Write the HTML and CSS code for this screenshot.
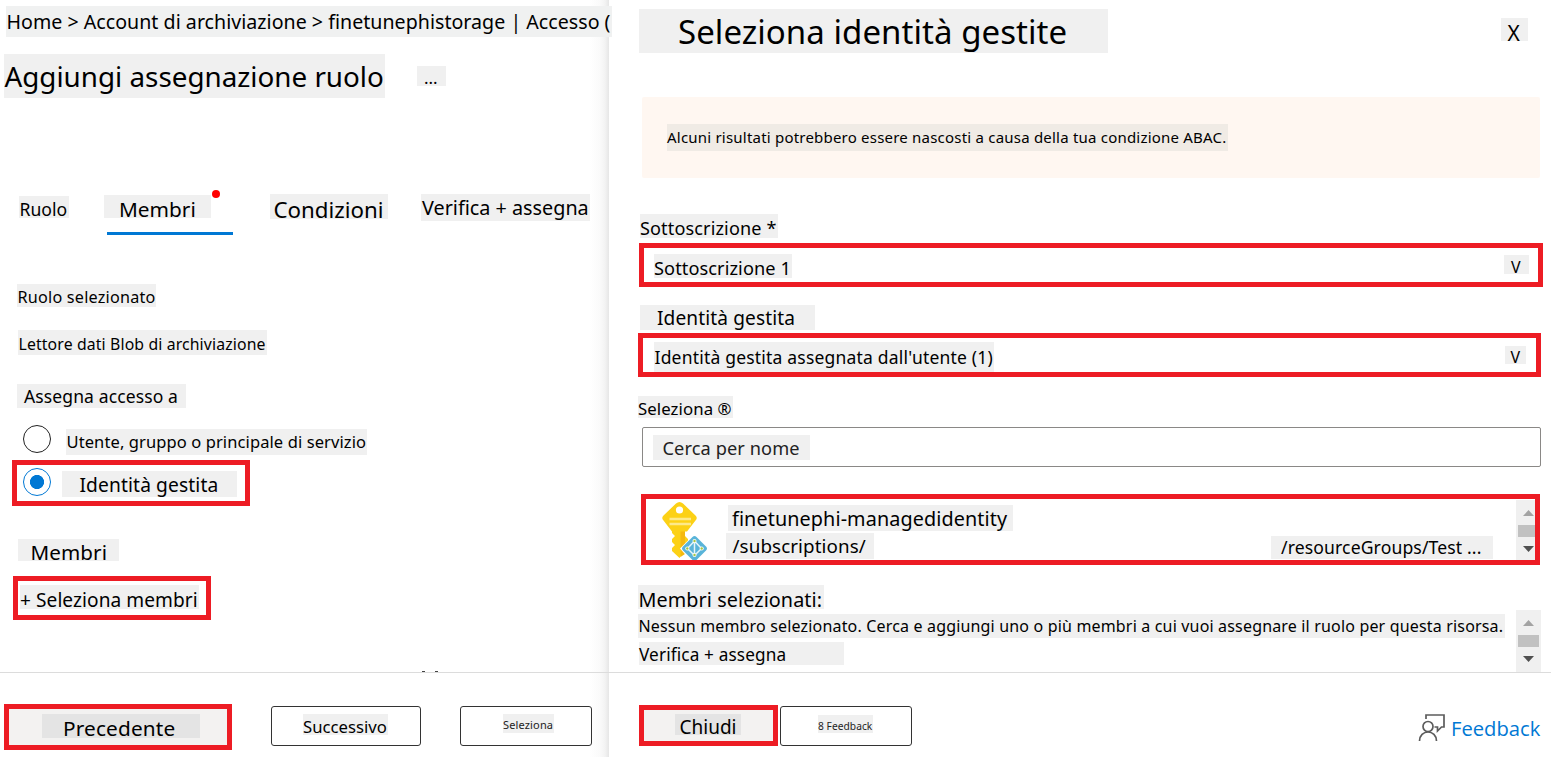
FILE: index.html
```html
<!DOCTYPE html>
<html lang="it">
<head>
<meta charset="utf-8">
<title>Aggiungi assegnazione ruolo</title>
<link rel="stylesheet" href="styles.css">
</head>
<body>
<div class="shell">
  <main class="pane pane-main">
    <div class="content">
      <nav class="chip crumb">Home &gt; Account di archiviazione &gt; finetunephistorage | Accesso (</nav>
      <header class="row title-row">
        <h1 class="chip title">Aggiungi assegnazione ruolo</h1>
        <span class="chip more">...</span>
      </header>
      <div class="row tabs">
        <span class="chip tab-role">Ruolo</span>
        <div class="tab-active"><span class="chip tab-members">Membri</span><i class="alert-dot"></i></div>
        <span class="chip tab-cond">Condizioni</span>
        <span class="chip tab-review">Verifica + assegna</span>
      </div>
      <p class="chip role-label">Ruolo selezionato</p>
      <p class="chip role-value">Lettore dati Blob di archiviazione</p>
      <p class="chip access-label">Assegna accesso a</p>
      <label class="row option"><i class="radio"></i><span class="chip opt-user">Utente, gruppo o principale di servizio</span></label>
      <label class="row marked option-on"><i class="radio on"></i><span class="chip opt-managed">Identità gestita</span></label>
      <p class="chip members-label">Membri</p>
      <div class="marked add-box"><a class="chip add">+ Seleziona membri</a></div>
      <div class="row specks"><i></i><i></i></div>
    </div>
    <footer class="row footer">
      <button class="marked prev"><span class="chip t-prev">Precedente</span></button>
      <button class="btn next"><span class="chip t-next">Successivo</span></button>
      <button class="btn pick"><span class="chip t-pick">Seleziona</span></button>
    </footer>
  </main>
  <aside class="pane pane-side">
    <div class="content">
      <header class="row side-head">
        <h2 class="chip side-title">Seleziona identità gestite</h2>
        <span class="chip close">X</span>
      </header>
      <div class="banner"><p class="chip banner-text">Alcuni risultati potrebbero essere nascosti a causa della tua condizione ABAC.</p></div>
      <p class="chip sub-label">Sottoscrizione *</p>
      <div class="row marked select-sub"><span class="chip sub-value">Sottoscrizione 1</span><span class="chip caret">V</span></div>
      <p class="chip id-label">Identità gestita</p>
      <div class="row marked select-id"><span class="chip id-value">Identità gestita assegnata dall'utente (1)</span><span class="chip caret caret-id">V</span></div>
      <p class="chip pick-label">Seleziona ®</p>
      <div class="search"><span class="chip search-text">Cerca per nome</span></div>
      <div class="row marked result">
        <svg class="key" width="50" height="60" viewBox="0 0 50 60">
          <path d="M12 29H25V36L28 39V47L19.500 58L12 51V48L15 45L12 42V39L15 36L12 33Z" fill="#fcd116"/>
          <path d="M20.500 31H25V54L20.500 57Z" fill="#f5b90f"/>
          <path d="M23 3.500L35.500 15.500Q38 18 35.500 20.500L27 31.500H12L3.500 20.500Q1 18 3.500 15.500L16 3.500Q19.500 .5 23 3.500Z" fill="#fcd116"/>
          <circle cx="19.500" cy="10" r="3.600" fill="#fff"/>
          <path d="M9.500 19H31M9.500 24H31" stroke="#fde98b" stroke-width="2.600"/>
          <path d="M34.500 34L51 48.500L34.500 65L20 48.500Z" fill="#fff"/>
          <path d="M32.500 37Q34.500 35 36.500 37L46 46.500Q48 48.500 46 50.500L36.500 60H32.500L23 50.500Q21 48.500 23 46.500Z" fill="#59b4d9"/>
          <path d="M34.500 40.500V55M34.500 41L27.500 48.500L34.500 55.500L41.500 48.500Z" fill="none" stroke="#e4f4fa" stroke-width="1.500"/>
          <g fill="#fff"><circle cx="34.500" cy="41" r="2"/><circle cx="27.300" cy="48.500" r="2"/><circle cx="41.700" cy="48.500" r="2"/><circle cx="34.500" cy="55" r="2"/></g>
          <g fill="#a3c644"><circle cx="34.500" cy="41" r="1.200"/><circle cx="27.300" cy="48.500" r="1.200"/><circle cx="41.700" cy="48.500" r="1.200"/><circle cx="34.500" cy="55" r="1.200"/></g>
        </svg>
        <div class="result-text">
          <span class="chip result-name">finetunephi-managedidentity</span>
          <span class="chip result-path">/subscriptions/</span>
        </div>
        <span class="chip result-group">/resourceGroups/Test ...</span>
        <svg class="scroll-a" width="25" height="61" viewBox="0 0 25 61">
          <path d="M0 0H25V61H0Z" fill="#f0f0f0"/><path d="M2 25H23V37H2Z" fill="#c1c1c1"/>
          <path d="M7 16L12.500 10L18 16Z" fill="#a3a3a3"/><path d="M7 46H18L12.500 52Z" fill="#505050"/>
        </svg>
      </div>
      <div class="row selected">
        <div class="selected-text">
          <h3 class="chip sel-title">Membri selezionati:</h3>
          <p class="chip sel-empty">Nessun membro selezionato. Cerca e aggiungi uno o più membri a cui vuoi assegnare il ruolo per questa risorsa.</p>
          <p class="chip sel-review">Verifica + assegna</p>
        </div>
        <svg class="scroll-b" width="25" height="62" viewBox="0 0 25 62">
          <path d="M0 0H25V62H0Z" fill="#f0f0f0"/><path d="M2 25H23V37H2Z" fill="#c1c1c1"/>
          <path d="M7 16L12.500 10L18 16Z" fill="#a3a3a3"/><path d="M7 46H18L12.500 52Z" fill="#505050"/>
        </svg>
      </div>
    </div>
    <footer class="row footer">
      <button class="marked shut"><span class="chip t-shut">Chiudi</span></button>
      <button class="btn fb"><span class="chip t-fb">8 Feedback</span></button>
      <a class="row feedback">
        <svg width="28" height="29" viewBox="0 0 28 29" fill="none" stroke="#5c5c5c" stroke-width="1.700">
          <path d="M8 6V2H26V14H23.500L19.500 18V14H16.500"/>
          <circle cx="10" cy="13.500" r="5"/>
          <path d="M1.500 28C1.500 22.500 5.500 19 10 19S18.500 22.500 18.500 28"/>
        </svg>
        <span class="fb-text">Feedback</span>
      </a>
    </footer>
  </aside>
</div>
</body>
</html>
```
FILE: styles.css
```css
* { box-sizing: border-box; }
body { margin: 0; background: #fff; color: #000; font-family: "Noto Sans", "Open Sans", sans-serif; }
h1, h2, h3, p { margin: 0; font-weight: 400; }
button { font-family: inherit; color: inherit; padding: 0; }

.shell { display: flex; width: 1551px; height: 757px; overflow: hidden; }
.pane { display: flex; flex-direction: column; height: 757px; }
.pane-main { width: 609px; background: linear-gradient(to right, #fff 590px, #fafafa 600px, #f3f3f3 605px, #e6e6e6 609px); }
.pane-side { width: 942px; }
.content { height: 672px; display: flex; flex-direction: column; align-items: flex-start; }
.row { display: flex; align-items: flex-start; }
.footer { height: 85px; border-top: 1px solid #dcdcdc; }

/* Highlighted label: --b is the distance from the box top to the text baseline */
.chip {
  display: block; flex: none;
  width: var(--w); height: var(--h);
  padding-left: var(--x, .5px);
  background: #f0f0f0;
  font-size: var(--s);
  line-height: calc(2 * var(--b) - 0.776em);
  letter-spacing: var(--ls, 0px);
  white-space: nowrap; text-align: left;
}
.marked { border: 5px solid #ed1c24; }
.btn { background: #fff; border: 1px solid #333; border-radius: 3px; }

/* Main pane */
.crumb { --w: 606px; --h: 31px; --b: 24px; --s: 19.6px; --ls: .025px; margin: 6px 0 0 6px; position: relative; z-index: 1; background: #f0f1f1; }
.title-row { margin: 17px 0 0 4px; gap: 32px; }
.title { --w: 381px; --h: 44px; --b: 33.5px; --s: 27.8px; }
.more { --w: 29px; --h: 20px; --b: 19px; --s: 17px; --x: 7px; margin-top: 12px; }
.tabs { margin: 95px 0 0 19px; }
.tab-role { --w: 50px; --h: 22px; --b: 20.3px; --s: 17.6px; margin-top: 3px; }
.tab-active { position: relative; width: 129px; height: 42px; margin: 0 0 0 35px; padding-top: 2px; }
.tab-active::after { content: ""; position: absolute; left: 3px; top: 39px; width: 126px; height: 3px; background: #0078d4; }
.alert-dot { position: absolute; left: 108px; top: -3px; width: 8px; height: 8px; border-radius: 50%; background: #f00; }
.tab-members { --w: 107px; --h: 23px; --b: 23px; --s: 20.8px; --x: 15px; }
.tab-cond { --w: 118px; --h: 25px; --b: 25px; --s: 22.3px; --x: 3.5px; margin: 1px 0 0 37px; }
.tab-review { --w: 169px; --h: 27px; --b: 22px; --s: 19.8px; --x: 1px; margin: 1px 0 0 33px; }
.role-label { --w: 139px; --h: 23px; --b: 20px; --s: 16.2px; --ls: .22px; margin: 49px 0 0 17px; }
.role-value { --w: 249px; --h: 25px; --b: 21px; --s: 15.8px; --ls: .13px; margin: 23px 0 0 18px; }
.access-label { --w: 169px; --h: 24px; --b: 19px; --s: 17.5px; --ls: .12px; --x: 7px; margin: 29px 0 0 17px; }
.option { margin: 17px 0 0 23px; height: 30px; }
.radio { flex: none; width: 28px; height: 28px; border: 1px solid #222; border-radius: 50%; background: #fff; }
.opt-user { --w: 301px; --h: 26px; --b: 19px; --s: 16.5px; --ls: .1px; margin: 4px 0 0 15px; }
.option-on { width: 238px; height: 46px; margin: 5px 0 0 12px; padding: 3px 0 0 6px; }
.radio.on { border-color: #0078d4; background: radial-gradient(circle, #0078d4 6.700px, #fff 7.400px); }
.opt-managed { --w: 175px; --h: 26px; --b: 21px; --s: 19.2px; --ls: .12px; --x: 17.5px; margin: 3px 0 0 11px; }
.members-label { --w: 101px; --h: 22px; --b: 21px; --s: 20.6px; --ls: .1px; --x: 12.5px; margin: 33px 0 0 18px; }
.add-box { width: 198px; height: 44px; margin: 15px 0 0 13px; padding: 4px 0 0 2px; }
.add { --w: 179px; --h: 24px; --b: 22.5px; --s: 19.1px; --ls: .06px; --x: 0px; }
.specks { margin: 51px 0 0 422px; gap: 10px; }
.specks i { width: 3px; height: 1px; background: #444; }

.prev { width: 228px; height: 46px; margin: 31px 0 0 4px; background: #f3f2f1; display: flex; padding: 5px 0 0 33px; }
.t-prev { --w: 158px; --h: 24px; --b: 23px; --s: 20.8px; --ls: .15px; --x: 21px; background: #e4e4e4; }
.next { width: 150px; height: 40px; margin: 33px 0 0 39px; display: flex; padding: 7px 0 0 31px; }
.t-next { --w: 85px; --h: 21px; --b: 19.3px; --s: 16.7px; --x: 0px; }
.pick { width: 132px; height: 40px; margin: 33px 0 0 39px; display: flex; padding: 7px 0 0 42px; }
.t-pick { --w: 51px; --h: 19px; --b: 15.5px; --s: 11px; --ls: .15px; --x: 0px; color: #222; }

/* Side pane */
.side-head { margin: 9px 0 0 30px; }
.side-title { --w: 469px; --h: 44px; --b: 35.5px; --s: 33px; --ls: .05px; --x: 39px; }
.close { --w: 27px; --h: 23px; --b: 23.5px; --s: 21px; --x: 6.5px; margin: 9px 0 0 393px; }
.banner { width: 898px; height: 81px; margin: 44px 0 0 33px; padding: 27px 0 0 25px; background: #fff7f1; border-radius: 2px; }
.banner-text { --w: 561px; --h: 27px; --b: 19px; --s: 15px; --ls: .21px; --x: 0px; background: #f0ebe5; }
.sub-label { --w: 138px; --h: 24px; --b: 22px; --s: 18.1px; --ls: .12px; --x: 0px; margin: 36px 0 0 31px; }
.select-sub { width: 904px; height: 44px; margin: 5px 0 0 30px; padding: 6px 0 0 10px; }
.sub-value { --w: 138px; --h: 24px; --b: 21.5px; --s: 18.2px; --ls: .08px; --x: 0px; }
.caret { --w: 25px; --h: 19px; --b: 18.7px; --s: 16px; --x: 7px; margin: 1px 0 0 712px; }
.id-label { --w: 175px; --h: 25px; --b: 20.5px; --s: 19.1px; --ls: .12px; --x: 17px; margin: 18px 0 0 31px; }
.select-id { width: 903px; height: 44px; margin: 3px 0 0 29px; padding: 4px 0 0 11px; }
.id-value { --w: 340px; --h: 30px; --b: 22px; --s: 17.5px; --ls: .2px; }
.caret-id { --w: 21px; --h: 18px; --b: 18px; --x: 5.5px; margin: 4px 0 0 511px; }
.pick-label { --w: 95px; --h: 22px; --b: 20px; --s: 16.8px; --ls: .08px; --x: 0px; margin: 19px 0 0 29px; }
.search { width: 899px; height: 40px; margin: 9px 0 0 33px; padding: 7px 0 0 10px; border: 1px solid #8a8886; border-radius: 2px; }
.search-text { --w: 157px; --h: 25px; --b: 20.7px; --s: 18.2px; --ls: .1px; --x: 9.5px; color: #222; }
.result { position: relative; width: 899px; height: 71px; margin: 27px 0 0 32px; overflow: hidden; }
.key { flex: none; margin: 1px 0 0 14px; }
.result-text { margin: 6px 0 0 16px; display: flex; flex-direction: column; gap: 2px; width: 287px; }
.result-name { --w: 285px; --h: 26px; --b: 21.5px; --s: 19.8px; --ls: .1px; --x: 4px; margin-left: 2px; }
.result-path { --w: 148px; --h: 26px; --b: 20.5px; --s: 18.8px; --ls: .1px; --x: 6.5px; }
.result-group { --w: 222px; --h: 23px; --b: 18.3px; --s: 17.6px; --ls: .12px; --x: 10px; margin: 37px 0 0 258px; }
.scroll-a { flex: none; margin: 1px 0 0 23px; }
.selected { margin: 20px 0 0 29px; }
.selected-text { width: 878px; }
.sel-title { --w: 186px; --h: 24px; --b: 23px; --s: 19.8px; --ls: .08px; }
.sel-empty { --w: 867px; --h: 24px; --b: 19px; --s: 16px; --ls: .17px; margin-top: 5px; }
.sel-review { --w: 205px; --h: 23px; --b: 19.7px; --s: 17.2px; --ls: .13px; --x: 0px; margin: 4px 0 0 1px; }
.scroll-b { flex: none; margin-top: 25px; }

.shut { width: 139px; height: 41px; margin: 32px 0 0 30px; background: #f3f2f1; display: flex; padding: 4px 0 0 31px; }
.t-shut { --w: 66px; --h: 21px; --b: 21px; --s: 19px; --x: 4.5px; background: #e4e4e4; }
.fb { width: 132px; height: 40px; margin: 33px 0 0 2px; display: flex; padding: 8px 0 0 37px; }
.t-fb { --w: 55px; --h: 18px; --b: 15px; --s: 10.2px; --ls: .05px; --x: 0px; color: #222; }
.feedback { margin: 40px 0 0 506px; gap: 5px; color: #0078d4; }
.fb-text { font: 20.200px/30px "Open Sans", sans-serif; }
```
